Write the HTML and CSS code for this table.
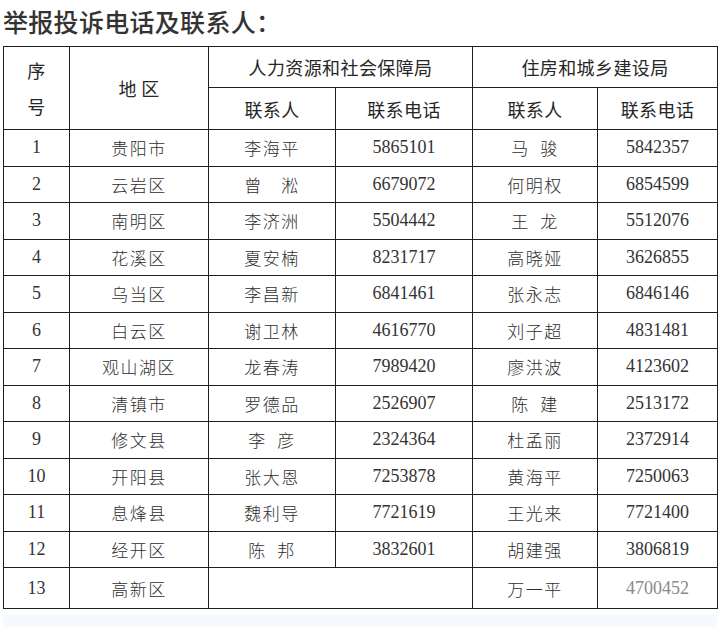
FILE: index.html
```html
<!DOCTYPE html>
<html lang="zh-CN">
<head>
<meta charset="utf-8">
<link rel="stylesheet" href="styles.css">
</head>
<body>
<div class="page">
  <h1 class="title">举报投诉电话及联系人：</h1>
  <table class="grid">
    <colgroup>
      <col class="c1"><col class="c2"><col class="c3"><col class="c4"><col class="c5"><col class="c6">
    </colgroup>
    <thead>
      <tr class="h1row">
        <th rowspan="2" class="seq"><span>序</span><span>号</span></th>
        <th rowspan="2">地&nbsp;区</th>
        <th colspan="2">人力资源和社会保障局</th>
        <th colspan="2">住房和城乡建设局</th>
      </tr>
      <tr class="h2row">
        <th>联系人</th><th>联系电话</th><th>联系人</th><th>联系电话</th>
      </tr>
    </thead>
    <tbody>
      <tr><td class="num">1</td><td class="zh">贵阳市</td><td class="zh">李海平</td><td class="num">5865101</td><td class="zh">马&nbsp;&nbsp;骏</td><td class="num">5842357</td></tr>
      <tr><td class="num">2</td><td class="zh">云岩区</td><td class="zh">曾　淞</td><td class="num">6679072</td><td class="zh">何明权</td><td class="num">6854599</td></tr>
      <tr><td class="num">3</td><td class="zh">南明区</td><td class="zh">李济洲</td><td class="num">5504442</td><td class="zh">王&nbsp;&nbsp;龙</td><td class="num">5512076</td></tr>
      <tr><td class="num">4</td><td class="zh">花溪区</td><td class="zh">夏安楠</td><td class="num">8231717</td><td class="zh">高晓娅</td><td class="num">3626855</td></tr>
      <tr><td class="num">5</td><td class="zh">乌当区</td><td class="zh">李昌新</td><td class="num">6841461</td><td class="zh">张永志</td><td class="num">6846146</td></tr>
      <tr><td class="num">6</td><td class="zh">白云区</td><td class="zh">谢卫林</td><td class="num">4616770</td><td class="zh">刘子超</td><td class="num">4831481</td></tr>
      <tr><td class="num">7</td><td class="zh">观山湖区</td><td class="zh">龙春涛</td><td class="num">7989420</td><td class="zh">廖洪波</td><td class="num">4123602</td></tr>
      <tr><td class="num">8</td><td class="zh">清镇市</td><td class="zh">罗德品</td><td class="num">2526907</td><td class="zh">陈&nbsp;&nbsp;建</td><td class="num">2513172</td></tr>
      <tr><td class="num">9</td><td class="zh">修文县</td><td class="zh">李&nbsp;&nbsp;彦</td><td class="num">2324364</td><td class="zh">杜孟丽</td><td class="num">2372914</td></tr>
      <tr><td class="num">10</td><td class="zh">开阳县</td><td class="zh">张大恩</td><td class="num">7253878</td><td class="zh">黄海平</td><td class="num">7250063</td></tr>
      <tr><td class="num">11</td><td class="zh">息烽县</td><td class="zh">魏利导</td><td class="num">7721619</td><td class="zh">王光来</td><td class="num">7721400</td></tr>
      <tr><td class="num">12</td><td class="zh">经开区</td><td class="zh">陈&nbsp;&nbsp;邦</td><td class="num">3832601</td><td class="zh">胡建强</td><td class="num">3806819</td></tr>
      <tr class="last"><td class="num">13</td><td class="zh">高新区</td><td colspan="2"></td><td class="zh">万一平</td><td class="num faded">4700452</td></tr>
    </tbody>
  </table>
  <div class="cutoff"></div>
</div>
</body>
</html>
```

FILE: styles.css
```css
html, body {
  margin: 0;
  padding: 0;
  background: #ffffff;
}

.page {
  padding: 6px 4px 0 3px;
  color: #2b2b2b;
  font-family: "Noto Sans CJK SC", "Noto Sans", sans-serif;
}

.title {
  margin: 0;
  font-size: 25px;
  line-height: 30px;
  font-weight: 500;
  letter-spacing: 0.3px;
  color: #333333;
}

.grid {
  margin-top: 10px;
  width: 714px;
  border-collapse: collapse;
  table-layout: fixed;
}

.c1 { width: 66px; }
.c2 { width: 139px; }
.c3 { width: 127px; }
.c4 { width: 137px; }
.c5 { width: 125px; }
.c6 { width: 120px; }

.grid th,
.grid td {
  border: 1.5px solid #1e1e1e;
  padding: 0;
  text-align: center;
  vertical-align: middle;
}

.grid th {
  font-family: "Noto Sans CJK SC", sans-serif;
  font-weight: 400;
  font-size: 18px;
  letter-spacing: 0.4px;
  color: #262626;
}

.h1row { height: 41px; }
.h2row { height: 42px; }

.seq span {
  display: block;
  line-height: 36px;
}

.grid tbody tr { height: 36.5px; }
.grid tbody tr.last { height: 41px; }

.zh {
  font-family: "Noto Sans CJK SC", sans-serif;
  font-weight: 300;
  font-size: 17px;
  letter-spacing: 1.5px;
  color: #2e2e2e;
}

.num {
  font-family: "Liberation Serif", serif;
  font-size: 18px;
  color: #333333;
}

.faded {
  color: #8a8a8a;
}

.cutoff {
  margin-top: 6px;
  height: 12px;
  background: #f6f9fd;
}
```
